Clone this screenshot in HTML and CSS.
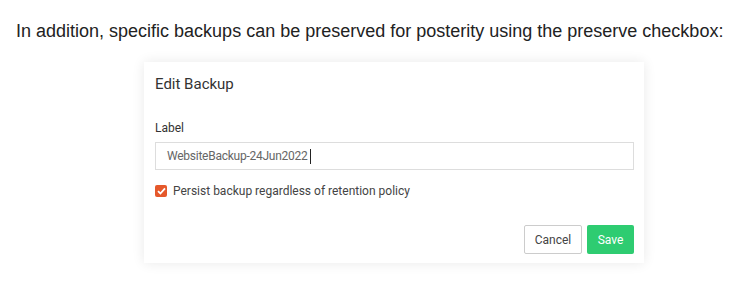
FILE: index.html
```html
<!DOCTYPE html>
<html lang="en">
<head>
    <meta charset="UTF-8">
    <meta name="viewport" content="width=device-width, initial-scale=1.0">
    <title>Edit Backup</title>
    <link rel="stylesheet" href="styles.css">
</head>
<body>
    <p class="intro">In addition, specific backups can be preserved for posterity using the preserve checkbox:</p>

    <div class="card">
        <h2 class="card-title">Edit Backup</h2>

        <form class="backup-form">
            <label for="label" class="field-label">Label</label>
            <div id="label" class="text-input">
                <span>WebsiteBackup-24Jun2022</span><span class="caret"></span>
            </div>

            <label class="check-row">
                <span class="checkbox">
                    <svg width="9" height="8" viewBox="0 0 9 8"><path d="M1 4.2 L3.4 6.5 L8 1.4" fill="none" stroke="#fff" stroke-width="1.8"/></svg>
                </span>
                Persist backup regardless of retention policy
            </label>

            <div class="actions">
                <button type="button" class="btn btn-cancel">Cancel</button>
                <button type="button" class="btn btn-save">Save</button>
            </div>
        </form>
    </div>
</body>
</html>
```

FILE: styles.css
```css
body {
    margin: 0;
    padding-bottom: 30px;
    font-family: "Liberation Sans", Arial, sans-serif;
    color: #222;
    background: #fff;
}

.intro {
    margin: 0;
    padding: 20px 0 0 16px;
    font-size: 18px;
    line-height: 22px;
}

.card {
    width: 500px;
    height: 201px;
    box-sizing: border-box;
    margin: 20px 0 0 144px;
    padding: 13px 10px 9px 11px;
    background: #fff;
    box-shadow: 0 0 12px rgba(0, 0, 0, 0.09);
    font-family: Roboto, sans-serif;
    color: #333;
}

.card-title {
    margin: 0;
    font-size: 15px;
    font-weight: normal;
    line-height: 18px;
}

.backup-form {
    display: flex;
    flex-direction: column;
}

.field-label {
    margin-top: 27px;
    font-size: 12px;
    line-height: 16px;
}

.text-input {
    margin-top: 6px;
    height: 28px;
    box-sizing: border-box;
    padding: 0 11px;
    border: 1px solid #ddd;
    display: flex;
    align-items: center;
    font-size: 12px;
    letter-spacing: -0.25px;
    color: #666;
}

.caret {
    width: 1px;
    height: 15px;
    margin-left: 2px;
    background: #222;
}

.check-row {
    display: flex;
    align-items: center;
    gap: 6px;
    margin-top: 14px;
    font-size: 12px;
    color: #444;
}

.checkbox {
    width: 12px;
    height: 12px;
    border-radius: 2px;
    background: #e5582b;
    display: flex;
    align-items: center;
    justify-content: center;
}

.actions {
    display: flex;
    justify-content: flex-end;
    gap: 5px;
    margin-top: 27px;
}

.btn {
    height: 29px;
    border-radius: 2px;
    font-family: Roboto, sans-serif;
    font-size: 12px;
    cursor: pointer;
}

.btn-cancel {
    width: 58px;
    background: #fff;
    border: 1px solid #ccc;
    color: #444;
}

.btn-save {
    width: 47px;
    background: #2ecc71;
    border: none;
    color: #fff;
}
```
